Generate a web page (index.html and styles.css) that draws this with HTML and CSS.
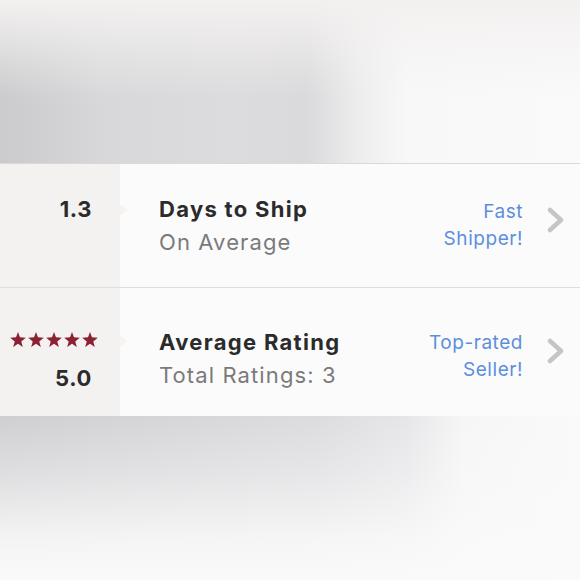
FILE: index.html
```html
<!DOCTYPE html>
<html>
<head>
<meta charset="utf-8">
<link rel="stylesheet" href="styles.css">
</head>
<body>
<div class="page">
  <div class="top-blur"></div>
  <div class="card">
    <div class="row row-ship">
      <div class="side">
        <div class="num">1.3</div>
      </div>
      <div class="main">
        <div class="texts">
          <div class="title">Days to Ship</div>
          <div class="sub">On Average</div>
        </div>
        <div class="badge">Fast<br>Shipper!</div>
        <svg class="chev" width="18" height="26" viewBox="0 0 18 26"><polyline points="3,3 14,13 3,23" fill="none" stroke="#c5c5c5" stroke-width="4.5" stroke-linecap="round" stroke-linejoin="round"/></svg>
      </div>
    </div>
    <div class="row row-rating">
      <div class="side">
        <div class="stars">
          <svg width="16" height="15" viewBox="0 0 24 23"><polygon points="12,0 15,8.2 24,8.8 17,14.4 19.4,23 12,18.2 4.6,23 7,14.4 0,8.8 9,8.2" fill="#8b2234"/></svg>
          <svg width="16" height="15" viewBox="0 0 24 23"><polygon points="12,0 15,8.2 24,8.8 17,14.4 19.4,23 12,18.2 4.6,23 7,14.4 0,8.8 9,8.2" fill="#8b2234"/></svg>
          <svg width="16" height="15" viewBox="0 0 24 23"><polygon points="12,0 15,8.2 24,8.8 17,14.4 19.4,23 12,18.2 4.6,23 7,14.4 0,8.8 9,8.2" fill="#8b2234"/></svg>
          <svg width="16" height="15" viewBox="0 0 24 23"><polygon points="12,0 15,8.2 24,8.8 17,14.4 19.4,23 12,18.2 4.6,23 7,14.4 0,8.8 9,8.2" fill="#8b2234"/></svg>
          <svg width="16" height="15" viewBox="0 0 24 23"><polygon points="12,0 15,8.2 24,8.8 17,14.4 19.4,23 12,18.2 4.6,23 7,14.4 0,8.8 9,8.2" fill="#8b2234"/></svg>
        </div>
        <div class="num">5.0</div>
      </div>
      <div class="main">
        <div class="texts">
          <div class="title">Average Rating</div>
          <div class="sub">Total Ratings: 3</div>
        </div>
        <div class="badge">Top-rated<br>Seller!</div>
        <svg class="chev" width="18" height="26" viewBox="0 0 18 26"><polyline points="3,3 14,13 3,23" fill="none" stroke="#c5c5c5" stroke-width="4.5" stroke-linecap="round" stroke-linejoin="round"/></svg>
      </div>
    </div>
  </div>
  <div class="bottom-blur"></div>
</div>
</body>
</html>
```

FILE: styles.css
```css
html, body {
  margin: 0;
  padding: 0;
  background: #fbfafb;
}

.page {
  width: 580px;
  height: 580px;
  display: flex;
  flex-direction: column;
  overflow: hidden;
  font-family: Inter, Lato, "Liberation Sans", sans-serif;
}

.top-blur {
  height: 163px;
  flex: none;
  background:
    linear-gradient(to bottom, rgba(243, 241, 240, 1) 0%, rgba(243, 241, 240, 0.6) 25%, rgba(243, 241, 240, 0) 60%),
    linear-gradient(to right, #cbcbcd 0%, #d8d8da 18%, #dcdbdd 40%, #dad9db 53%, #eeedee 62%, #f9f8f9 70%, #fbfafb 100%);
}

.card {
  border-top: 1px solid #dad8d8;
  background: #fcfbfc;
  flex: none;
}

.row {
  display: grid;
  grid-template-columns: 120px 1fr;
}

.row-ship {
  height: 123px;
  border-bottom: 1px solid #dfdddd;
}

.row-rating {
  height: 128px;
}

.side {
  background: #f4f2f0;
  position: relative;
  display: flex;
  flex-direction: column;
  align-items: flex-end;
  padding-right: 28px;
}

.side::after {
  content: "";
  position: absolute;
  right: -8px;
  width: 0;
  height: 0;
  border-top: 6px solid transparent;
  border-bottom: 6px solid transparent;
  border-left: 8px solid #f6f4f2;
}

.row-ship .side {
  padding-top: 29px;
}

.row-ship .side::after {
  top: 40px;
}

.row-rating .side {
  padding-top: 44px;
  padding-right: 22px;
}

.row-rating .side::after {
  top: 47px;
}

.num {
  font-size: 22px;
  font-weight: 700;
  line-height: 33px;
  letter-spacing: 0.6px;
  color: #2b2b2b;
}

.row-rating .num {
  margin-top: 15px;
  margin-right: 6px;
}

.stars {
  display: flex;
  gap: 2px;
  height: 15px;
}

.main {
  display: flex;
  align-items: flex-start;
  padding-left: 39px;
  padding-right: 15px;
}

.row-ship .main {
  padding-top: 29px;
}

.row-rating .main {
  padding-top: 38px;
}

.texts {
  flex: 1;
}

.title {
  font-size: 22px;
  font-weight: 700;
  line-height: 33px;
  letter-spacing: 1.3px;
  color: #2b2b2b;
}

.sub {
  font-size: 22px;
  font-weight: 400;
  line-height: 33px;
  letter-spacing: 1.1px;
  color: #7a7a7a;
}

.badge {
  text-align: right;
  font-size: 19px;
  line-height: 27px;
  letter-spacing: 0.55px;
  color: #5b8fdc;
  margin-top: 5px;
}

.row-rating .badge {
  margin-top: 3px;
}

.chev {
  margin-left: 24px;
  margin-top: 14px;
  flex: none;
}

.row-rating .chev {
  margin-top: 12px;
}

.bottom-blur {
  flex: 1;
  background:
    linear-gradient(to bottom, rgba(251, 250, 251, 0) 0%, rgba(251, 250, 251, 0.35) 35%, rgba(251, 250, 251, 0.85) 75%, rgba(251, 250, 251, 1) 100%),
    linear-gradient(to right, #cfcfd1 0%, #d6d6d8 30%, #dcdbdd 55%, #e6e5e7 70%, #f7f6f7 80%, #fbfafb 100%);
}
```
